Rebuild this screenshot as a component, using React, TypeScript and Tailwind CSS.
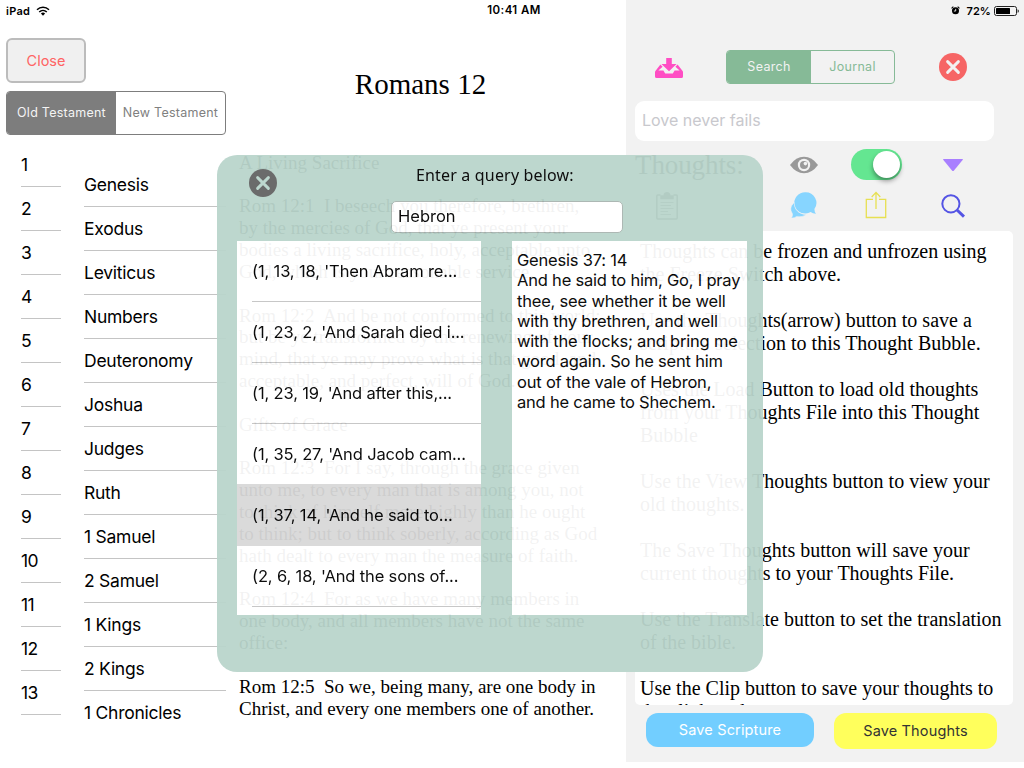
import React from 'react';

const numbers = ['1', '2', '3', '4', '5', '6', '7', '8', '9', '10', '11', '12', '13'];

const books = [
  'Genesis',
  'Exodus',
  'Leviticus',
  'Numbers',
  'Deuteronomy',
  'Joshua',
  'Judges',
  'Ruth',
  '1 Samuel',
  '2 Samuel',
  '1 Kings',
  '2 Kings',
  '1 Chronicles',
];

const scripture = `A Living Sacrifice

Rom 12:1  I beseech you therefore, brethren,
by the mercies of God, that ye present your
bodies a living sacrifice, holy, acceptable unto
God, which is your reasonable service.

Rom 12:2  And be not conformed to this world:
but be ye transformed by the renewing of your
mind, that ye may prove what is that good, and
acceptable, and perfect, will of God.

Gifts of Grace

Rom 12:3  For I say, through the grace given
unto me, to every man that is among you, not
to think of himself more highly than he ought
to think; but to think soberly, according as God
hath dealt to every man the measure of faith.

Rom 12:4  For as we have many members in
one body, and all members have not the same
office:

Rom 12:5  So we, being many, are one body in
Christ, and every one members one of another.`;

const thoughts = `Thoughts can be frozen and unfrozen using
the Freeze Switch above.

Use the Thoughts(arrow) button to save a
scripture selection to this Thought Bubble.

Uses the Load Button to load old thoughts
from your Thoughts File into this Thought
Bubble

Use the View Thoughts button to view your
old thoughts.

The Save Thoughts button will save your
current thoughts to your Thoughts File.

Use the Translate button to set the translation
of the bible.

Use the Clip button to save your thoughts to
the clipboard.`;

const results = [
  "(1, 13, 18, 'Then Abram re...",
  "(1, 23, 2, 'And Sarah died i...",
  "(1, 23, 19, 'And after this,...",
  "(1, 35, 27, 'And Jacob cam...",
  "(1, 37, 14, 'And he said to...",
  "(2, 6, 18, 'And the sons of...",
];

const passage = `Genesis 37: 14
And he said to him, Go, I pray
thee, see whether it be well
with thy brethren, and well
with the flocks; and bring me
word again. So he sent him
out of the vale of Hebron,
and he came to Shechem.`;

function CloseCircle({ className, cross }: { className: string; cross: string }) {
  return (
    <svg viewBox="0 0 28 28" className={className}>
      <circle cx="14" cy="14" r="14" fill="currentColor" />
      <path d="M8.6 8.6 L19.4 19.4 M19.4 8.6 L8.6 19.4" stroke={cross} strokeWidth="2.9" strokeLinecap="round" />
    </svg>
  );
}

function StatusBar() {
  return (
    <div className="absolute inset-x-0 top-0 flex h-[22px] items-center text-[11px] leading-none font-semibold text-black">
      <div className="flex flex-1 items-center pl-[6px]">
        <span className="tracking-[0.3px]">iPad</span>
        <svg viewBox="0 0 14 10" className="mb-px ml-[6px] h-[10px] w-[14px]" fill="none" stroke="#000">
          <path d="M1 3.8 A8.6 8.6 0 0 1 13 3.8" strokeWidth="1.5" />
          <path d="M3.2 6 A5.6 5.6 0 0 1 10.8 6" strokeWidth="1.5" />
          <path d="M4.9 7.6 A3 3 0 0 1 9.1 7.6 L7 9.7 Z" fill="#000" stroke="none" />
        </svg>
      </div>
      <span className="ml-[3px] text-[11.5px] tracking-[0.4px]">10:41 AM</span>
      <div className="flex flex-1 items-center justify-end pr-[5px]">
        <svg viewBox="0 0 10 10" className="mb-px h-[9px] w-[9px]">
          <circle cx="5" cy="5.4" r="3.9" fill="#000" />
          <path d="M0.6 2.6 L2.6 0.8 M9.4 2.6 L7.4 0.8" stroke="#000" strokeWidth="1.2" />
          <path d="M5.2 3.2 V5.6 H3.2" stroke="#f2f2f2" strokeWidth="1" fill="none" />
        </svg>
        <span className="ml-[6px] tracking-[0.1px]">72%</span>
        <svg viewBox="0 0 25 10" className="mb-px ml-[3px] h-[10px] w-[25px]">
          <rect x="0.5" y="0.5" width="22" height="9" rx="2" fill="none" stroke="#222" />
          <rect x="2" y="2" width="14" height="6" rx="0.6" fill="#000" />
          <path d="M23.6 3.2 Q24.9 3.6 24.9 5 Q24.9 6.4 23.6 6.8 Z" fill="#222" />
        </svg>
      </div>
    </div>
  );
}

function Sidebar() {
  return (
    <aside className="flex w-[239px] flex-col pt-[38px] pl-[6px]">
      <button className="h-[45px] w-[80px] rounded-[6px] border-2 border-[#bcbcbc] bg-[#f0f0f0] pt-px text-[14.5px] text-[#ff6464]">
        Close
      </button>
      <div className="mt-2 flex h-[44px] w-[220px] overflow-hidden rounded-[4px] border border-[#7d7d7d] text-[12.5px] tracking-[0.25px] whitespace-nowrap">
        <div className="flex w-[109px] items-center justify-center bg-[#7d7d7d] text-[#f4f4f4]">Old Testament</div>
        <div className="flex flex-1 items-center justify-center text-[#808080]">New Testament</div>
      </div>
      <div className="flex text-[17.5px] text-black">
        <ul className="ml-[15px] w-[40px] pt-2">
          {numbers.map((n) => (
            <li key={n} className="flex h-11 items-center border-b border-[#c4c4c4] pt-0.5 tracking-[-0.6px]">
              {n}
            </li>
          ))}
        </ul>
        <ul className="ml-[23px] w-[142px] pt-7">
          {books.map((name) => (
            <li
              key={name}
              className="flex h-11 items-center border-b border-[#c4c4c4] pt-0.5 tracking-[-0.25px] whitespace-nowrap last:border-transparent"
            >
              {name}
            </li>
          ))}
        </ul>
      </div>
    </aside>
  );
}

function Reader() {
  return (
    <main className="w-[387px] pt-[67px] font-['Liberation_Serif',serif] text-black">
      <h1 className="w-[363px] text-center text-[29px] leading-[35px]">Romans 12</h1>
      <div className="mt-[49.6px] text-[19px] leading-[21.85px] whitespace-pre">{scripture}</div>
    </main>
  );
}

function ThoughtsPanel() {
  return (
    <section className="flex h-[762px] flex-1 flex-col bg-[#f2f2f2] pt-[50px] pl-[9px]">
      <div className="flex h-[34px] items-center pl-5">
        <svg viewBox="0 0 28 20" className="mt-px h-5 w-7" fill="#ff4ec4">
          <path d="M11.2 0 H16.8 V6 H21.6 L14 13.2 L6.4 6 H11.2 Z" />
          <path d="M5.4 6.6 L1 12.2 Q0 13.4 0 14 V18.4 Q0 20 1.6 20 H26.4 Q28 20 28 18.4 V14 Q28 13.4 27 12.2 L22.6 6.6 L20.4 8.7 L24.6 12.6 H19.6 L17.8 15.6 H10.2 L8.4 12.6 H3.4 L7.6 8.7 Z" />
        </svg>
        <div className="ml-[43px] flex h-[34px] w-[169px] overflow-hidden rounded-[4px] border border-[#86ba97] text-[12.5px] tracking-[0.3px]">
          <div className="flex w-[84px] items-center justify-center bg-[#86ba97] text-[#f2f2f2]">Search</div>
          <div className="flex flex-1 items-center justify-center text-[#86ba97]">Journal</div>
        </div>
        <CloseCircle className="ml-11 h-7 w-7 text-[#f66565]" cross="#f2f2f2" />
      </div>
      <div className="mt-[17px] flex h-[40px] w-[359px] items-center rounded-[9px] bg-white pb-[2px] pl-[7px] text-[16px] text-[#c8c8cd]">
        Love never fails
      </div>
      <div className="mt-2 grid h-[82px] grid-cols-[135px_69px_75px_80px] grid-rows-[33px_49px]">
        <div className="font-['Liberation_Serif',serif] text-[27px] leading-[33px] tracking-[-0.1px] text-black">Thoughts:</div>
        <svg viewBox="0 0 28 18" className="mt-[7px] ml-5 h-[18px] w-7">
          <path d="M0 9 Q6 0.8 14 0.8 Q22 0.8 28 9 Q22 17.2 14 17.2 Q6 17.2 0 9 Z" fill="#999" />
          <circle cx="14" cy="9" r="6.2" fill="#f2f2f2" />
          <circle cx="14" cy="9" r="4" fill="#999" />
          <circle cx="15.4" cy="7.6" r="1.8" fill="#f2f2f2" />
        </svg>
        <div className="ml-3 flex h-[31px] w-[51px] items-center justify-end rounded-full bg-[#64e691] pr-[2px]">
          <div className="size-[27px] rounded-full bg-white shadow-[0_3px_5px_rgba(0,0,0,0.4)]" />
        </div>
        <svg viewBox="0 0 20 12" className="mt-[10px] ml-[29px] h-3 w-5">
          <path d="M0.6 0 H19.4 Q20.4 0 19.6 1 L11 11.4 Q10 12.4 9 11.4 L0.4 1 Q-0.4 0 0.6 0 Z" fill="#a97fff" />
        </svg>
        <svg viewBox="0 0 22 28" className="mt-[10px] ml-[21px] h-7 w-[22px]" fill="none" stroke="#333" strokeWidth="1.4">
          <path d="M4.5 3 H1.6 Q0.8 3 0.8 4 V26 Q0.8 27 1.8 27 H20.2 Q21.2 27 21.2 26 V4 Q21.2 3 20.4 3 H17.5" />
          <path d="M5 6.5 V4 H8 Q8.3 0.8 11 0.8 Q13.7 0.8 14 4 H17 V6.5 Z" fill="#333" />
          <path d="M4.5 10.5 H17.5 M4.5 13.5 H15 M4.5 16.5 H17.5 M4.5 19.5 H12 M4.5 22.5 H15" strokeWidth="0.7" />
        </svg>
        <svg viewBox="0 0 27 27" className="mt-[10px] ml-5 h-[27px] w-[27px]" fill="#87d5ff">
          <path d="M15.5 0.3 A10.8 10.6 0 0 1 24.4 17 Q24.4 20 26 21.8 Q22.8 21.8 20.6 20 A10.8 10.6 0 1 1 15.5 0.3 Z" />
          <path
            d="M4.2 10.5 Q4.2 18.6 11 21.4 Q13.6 22.6 16.4 22.4 Q12.4 25.6 6.8 24.4 Q4.4 26.2 1.2 26 Q3 24 2.4 21.8 Q-1.6 15.8 4.2 10.5 Z"
            stroke="#f2f2f2"
            strokeWidth="0.5"
          />
        </svg>
        <svg viewBox="0 0 22 28" className="mt-[9px] ml-[26px] h-7 w-[22px]" fill="none" stroke="#e7e052" strokeWidth="1.3">
          <path d="M8 8.3 H1.3 V26.5 H20.7 V8.3 H14" />
          <path d="M11 18 V2 M6.7 6 L11 1.4 L15.3 6" />
        </svg>
        <svg viewBox="0 0 24 24" className="mt-3 ml-[27px] size-6" fill="none" stroke="#5454e4">
          <circle cx="9.9" cy="9.8" r="8.6" strokeWidth="2" />
          <path d="M16 16 L23 22.6" strokeWidth="3" />
        </svg>
      </div>
      <div className="h-[474px] w-[378px] overflow-hidden rounded-[5px] bg-white pt-[9px] pl-[5px] font-['Liberation_Serif',serif] text-[20px] leading-[23px] whitespace-pre text-black">
        {thoughts}
      </div>
      <div className="mt-2 flex items-start gap-5 pl-[11px] text-[14.5px] tracking-[0.15px]">
        <button className="h-[34px] w-[168px] rounded-[12px] bg-[#72ceff] text-white">Save Scripture</button>
        <button className="h-9 w-[163px] rounded-[12px] bg-[#ffff5c] text-[#333]">Save Thoughts</button>
      </div>
    </section>
  );
}

function SearchDialog() {
  return (
    <div className="absolute top-[155px] left-[217px] h-[517px] w-[546px] rounded-[20px] bg-[#bad5cc] px-5 opacity-95">
      <div className="flex h-[86px]">
        <CloseCircle className="mt-[14px] ml-3 h-7 w-7 shrink-0 text-[#646464]" cross="#bad5cc" />
        <div className="ml-[113px] w-[234px]">
          <div className="mt-[8px] ml-[26px] font-['Noto_Sans',sans-serif] text-[16px] leading-6 tracking-[0.17px] whitespace-nowrap text-black">
            Enter a query below:
          </div>
          <div className="mt-[14px] ml-[1px] flex h-8 w-[232px] items-center rounded-[5px] border border-[#a9b5b0] bg-white pb-[2px] pl-[6px] text-[16.5px] text-black">
            Hebron
          </div>
        </div>
      </div>
      <div className="flex h-[374px] justify-between">
        <ul className="w-[244px] overflow-hidden bg-white text-[16.5px] text-black">
          {results.map((r, i) => (
            <li
              key={r}
              className={
                i === 4
                  ? 'relative h-[61px] bg-[#d9d9d9] pl-[15px] shadow-[0_-1px_0_#d9d9d9]'
                  : 'h-[61px] pl-[15px]'
              }
            >
              <div
                className={
                  i === 3 || i === 4
                    ? 'flex h-full items-center border-b border-transparent tracking-[-0.14px] whitespace-nowrap'
                    : 'flex h-full items-center border-b border-[#c4c4c4] tracking-[-0.14px] whitespace-nowrap'
                }
              >
                {r}
              </div>
            </li>
          ))}
        </ul>
        <div className="-mr-1 w-[235px] bg-white pt-[9px] pl-[5px] text-[16.5px] leading-[20.3px] tracking-[-0.2px] whitespace-pre text-black">
          {passage}
        </div>
      </div>
    </div>
  );
}

export default function App() {
  return (
    <div className="relative flex h-[768px] w-[1024px] overflow-hidden bg-white font-['Inter',sans-serif]">
      <Sidebar />
      <Reader />
      <ThoughtsPanel />
      <SearchDialog />
      <StatusBar />
    </div>
  );
}
